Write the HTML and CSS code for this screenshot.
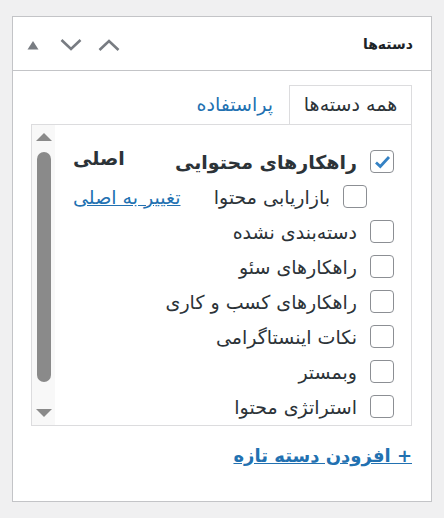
FILE: index.html
```html
<!DOCTYPE html>
<html lang="fa" dir="rtl">
<head>
  <meta charset="UTF-8">
  <meta name="viewport" content="width=device-width, initial-scale=1">
  <title>دسته‌ها</title>
  <link rel="stylesheet" href="styles.css">
</head>
<body>
  <div class="postbox">
    <div class="postbox-header">
      <h2 class="hndle">دسته‌ها</h2>
      <div class="handle-actions">
        <button class="handle-btn" aria-label="بالا">
          <svg width="22" height="12" viewBox="0 0 22 12"><path d="M1.5 11 L11 2 L20.5 11" fill="none" stroke="#787c82" stroke-width="2.6"/></svg>
        </button>
        <button class="handle-btn" aria-label="پایین">
          <svg width="22" height="12" viewBox="0 0 22 12"><path d="M1.5 1 L11 10 L20.5 1" fill="none" stroke="#787c82" stroke-width="2.6"/></svg>
        </button>
        <button class="handle-btn" aria-label="بستن">
          <svg width="12" height="10" viewBox="0 0 12 10"><path d="M0.5 9.5 L6 1 L11.5 9.5 Z" fill="#787c82"/></svg>
        </button>
      </div>
    </div>

    <div class="inside">
      <ul class="category-tabs">
        <li class="tab-active">همه دسته‌ها</li>
        <li><a href="#">پراستفاده</a></li>
      </ul>

      <div class="tabs-panel">
        <ul class="checklist">
          <li class="cat-row main">
            <span class="cb checked">
              <svg width="17" height="14" viewBox="0 0 17 14"><path d="M2 7.5 L6.3 11.5 L15 2" fill="none" stroke="#3582c4" stroke-width="2.8"/></svg>
            </span>
            <span class="cat-name">راهکارهای محتوایی</span>
            <span class="primary-label">اصلی</span>
          </li>
          <li class="cat-row child">
            <span class="cb"></span>
            <span class="cat-name">بازاریابی محتوا</span>
            <a href="#" class="make-primary">تغییر به اصلی</a>
          </li>
          <li class="cat-row"><span class="cb"></span><span class="cat-name">دسته‌بندی نشده</span></li>
          <li class="cat-row"><span class="cb"></span><span class="cat-name">راهکارهای سئو</span></li>
          <li class="cat-row"><span class="cb"></span><span class="cat-name">راهکارهای کسب و کاری</span></li>
          <li class="cat-row"><span class="cb"></span><span class="cat-name">نکات اینستاگرامی</span></li>
          <li class="cat-row"><span class="cb"></span><span class="cat-name">وبمستر</span></li>
          <li class="cat-row"><span class="cb"></span><span class="cat-name">استراتژی محتوا</span></li>
        </ul>

        <div class="scrollbar">
          <span class="arrow-up"></span>
          <span class="thumb"></span>
          <span class="arrow-down"></span>
        </div>
      </div>

      <a href="#" class="add-new">+ افزودن دسته تازه</a>
    </div>
  </div>
</body>
</html>
```

FILE: styles.css
```css
body {
  margin: 0;
  padding: 16px 12px 0;
  background-color: #f0f0f1;
  font-family: "DejaVu Sans", sans-serif;
  color: #2c3338;
  direction: rtl;
}

.postbox {
  width: 418px;
  background-color: #ffffff;
  border: 1px solid #c3c4c7;
}

.postbox-header {
  display: flex;
  align-items: center;
  justify-content: space-between;
  height: 53px;
  border-bottom: 1px solid #c3c4c7;
}

.hndle {
  margin: 0;
  padding-right: 18px;
  font-size: 14px;
  font-weight: bold;
  color: #1d2327;
}

.handle-actions {
  display: flex;
  padding-left: 1px;
  padding-top: 3px;
}

.handle-btn {
  display: flex;
  align-items: center;
  justify-content: center;
  width: 38px;
  height: 36px;
  padding: 0;
  border: 0;
  background: none;
}

.inside {
  padding: 14px 19px 35px 18px;
}

.category-tabs {
  display: flex;
  align-items: center;
  margin: 0;
  padding: 0;
  list-style: none;
  font-size: 19px;
}

.category-tabs li {
  height: 38px;
  line-height: 37px;
}

.tab-active {
  width: 121px;
  text-align: center;
  border: 1px solid #dcdcde;
  border-bottom: 0;
  color: #2c3338;
}

.category-tabs a {
  display: block;
  margin-right: 16px;
  color: #2271b1;
  text-decoration: none;
}

.tabs-panel {
  display: flex;
  height: 300px;
  overflow: hidden;
  border: 1px solid #dcdcde;
}

.checklist {
  flex: 1;
  margin: 0;
  padding: 19px 17px 0 18px;
  list-style: none;
  font-size: 19px;
}

.cat-row {
  display: flex;
  align-items: center;
  height: 35px;
}

.cat-row.child {
  padding-right: 27px;
}

.cb {
  display: flex;
  align-items: center;
  justify-content: center;
  flex: none;
  width: 22px;
  height: 21px;
  margin-left: 13px;
  border: 1px solid #8c8f94;
  border-radius: 4px;
  background-color: #ffffff;
}

.main .cat-name {
  font-weight: bold;
  color: #2c3338;
}

.primary-label {
  margin-right: auto;
  margin-top: -8px;
  font-weight: bold;
}

.make-primary {
  margin-right: auto;
  color: #2271b1;
}

.scrollbar {
  display: flex;
  flex-direction: column;
  align-items: center;
  flex: none;
  width: 23px;
  background-color: #f8f8f8;
}

.arrow-up,
.arrow-down {
  width: 0;
  height: 0;
  border-left: 8px solid transparent;
  border-right: 8px solid transparent;
}

.arrow-up {
  margin-top: 8px;
  border-bottom: 8px solid #8a8a8a;
}

.thumb {
  width: 14px;
  height: 230px;
  margin-top: 11px;
  border-radius: 7px;
  background-color: #8a8a8a;
}

.arrow-down {
  margin-top: 27px;
  border-top: 8px solid #8a8a8a;
}

.add-new {
  display: inline-block;
  margin-top: 19px;
  font-size: 18px;
  font-weight: bold;
  color: #2271b1;
}
```
